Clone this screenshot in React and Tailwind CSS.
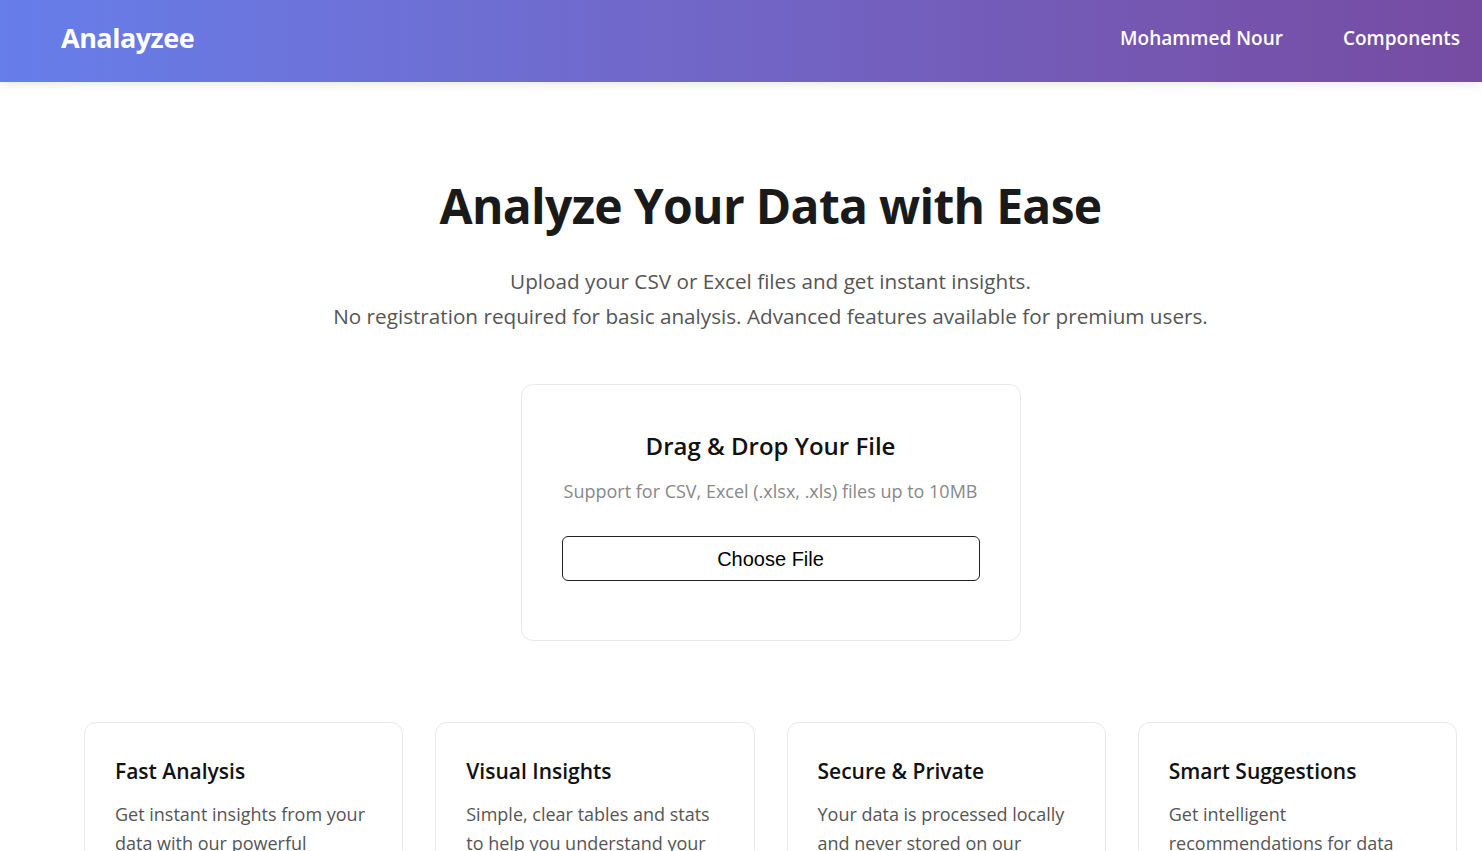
import React from "react";

const features = [
  { title: "Fast Analysis", text: "Get instant insights from your data with our powerful analysis engine." },
  { title: "Visual Insights", text: "Simple, clear tables and stats to help you understand your data at a glance." },
  { title: "Secure & Private", text: "Your data is processed locally and never stored on our servers." },
  { title: "Smart Suggestions", text: "Get intelligent recommendations for data cleaning and analysis." },
];

const App = () => {
  return (
    <div className="min-h-screen bg-white" style={{ fontFamily: '"Open Sans", "Noto Sans", sans-serif' }}>
      <header className="h-[82px] flex items-center justify-between pl-[61px] pr-[22px] pb-[5px] bg-gradient-to-r from-[#667eea] to-[#764ba2] shadow-[0_2px_10px_rgba(0,0,0,0.1)]">
        <div className="text-white font-bold text-[27px] tracking-[-0.5px]">Analayzee</div>
        <nav className="flex items-center gap-[60px] text-white font-semibold text-[19px]">
          <a href="#">Mohammed Nour</a>
          <a href="#">Components</a>
        </nav>
      </header>

      <div className="pl-[59px]">
        <div className="px-[25px]">
          <section className="pt-[92px] text-center">
            <h1 className="text-[48px] leading-[64px] font-bold text-[#1a1a1a] tracking-[-0.7px]">
              Analyze Your Data with Ease
            </h1>
            <p className="mt-[26px] text-[20.7px] leading-[35px] text-[#555]">
              Upload your CSV or Excel files and get instant insights.
              <br />
              No registration required for basic analysis. Advanced features available for premium users.
            </p>
          </section>

          <div className="mt-[50px] mx-auto w-[500px] h-[257px] border border-[#e8e8e8] rounded-[12px] px-[40px] pt-[45px] text-center">
            <h2 className="text-[24px] leading-[32px] font-semibold text-[#111]">Drag &amp; Drop Your File</h2>
            <p className="mt-[17px] text-[18px] leading-[24px] text-[#888]">
              Support for CSV, Excel (.xlsx, .xls) files up to 10MB
            </p>
            <button
              className="mt-[33px] w-full h-[45px] border border-[#222] rounded-[6px] bg-white text-[20px] text-black"
              style={{ fontFamily: '"Liberation Sans", Arial, sans-serif' }}
            >
              Choose File
            </button>
          </div>

          <div className="mt-[81px] grid grid-cols-4 gap-[32px]">
            {features.map((f) => (
              <div key={f.title} className="border border-[#e8e8e8] rounded-[12px] px-[30px] pt-[33px] pb-[30px]">
                <h3 className="text-[21px] leading-[30px] font-semibold text-[#111]">{f.title}</h3>
                <p className="mt-[14px] text-[18px] leading-[29px] text-[#555]">{f.text}</p>
              </div>
            ))}
          </div>
        </div>
      </div>
    </div>
  );
};

export default App;
